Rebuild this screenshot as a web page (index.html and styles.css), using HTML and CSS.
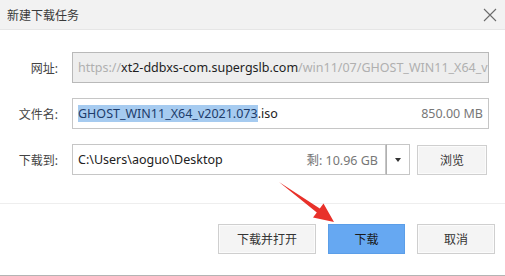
FILE: index.html
```html
<!DOCTYPE html>
<html lang="zh-CN">
<head>
  <meta charset="UTF-8" />
  <title>新建下载任务</title>
  <link rel="stylesheet" href="styles.css">
</head>
<body>
  <div class="dialog">
    <!-- Title bar -->
    <div class="titlebar">
      <span class="title">新建下载任务</span>
      <svg class="close" width="14" height="14" viewBox="0 0 14 14">
        <path d="M1 1 L13 13 M13 1 L1 13" stroke="#6b6b6b" stroke-width="1.1" fill="none"/>
      </svg>
    </div>

    <!-- Form rows -->
    <div class="form">
      <div class="row">
        <span class="label">网址:</span>
        <div class="field disabled">
          <span class="dim">https://</span><span class="host">xt2-ddbxs-com.supergslb.com</span><span class="dim">/win11/07/GHOST_WIN11_X64_v</span>
        </div>
      </div>
      <div class="row">
        <span class="label">文件名:</span>
        <div class="field">
          <span class="sel">GHOST_WIN11_X64_v2021.073</span><span>.iso</span>
          <span class="meta">850.00 MB</span>
        </div>
      </div>
      <div class="row">
        <span class="label">下载到:</span>
        <div class="field path">
          <span>C:\Users\aoguo\Desktop</span>
          <span class="meta">剩: 10.96 GB</span>
        </div>
        <div class="dropdown"><span class="caret"></span></div>
        <button class="btn browse">浏览</button>
      </div>
    </div>

    <!-- Footer buttons -->
    <div class="footer">
      <button class="btn wide">下载并打开</button>
      <button class="btn primary">下载</button>
      <button class="btn">取消</button>
    </div>

    <!-- Red annotation arrow -->
    <svg class="arrow" width="505" height="276" viewBox="0 0 505 276">
      <polygon points="279,182 319.8,208.5 323.5,203.5 334,222 313,217.5 316.8,212.5" fill="#e8312a"/>
    </svg>
  </div>
</body>
</html>
```

FILE: styles.css
```css
* { margin: 0; padding: 0; box-sizing: border-box; }

body {
  font-family: "Noto Sans", "Noto Sans CJK SC", sans-serif;
  font-size: 12px;
  color: #333;
  background: #fff;
}

.dialog {
  position: relative;
  width: 505px;
  height: 276px;
  background: #fff;
  border-bottom: 1px solid #b4b4b4;
}

/* Title bar */
.titlebar {
  height: 30px;
  display: flex;
  align-items: center;
  justify-content: space-between;
  padding: 0 8px 0 7px;
  background: #f2f2f2;
  border-bottom: 1px solid #e6e6e6;
}
.title { font-size: 12px; color: #3a3a3a; }
.close { margin-top: 1px; }

/* Form */
.form { padding: 22px 16px 28px 0; }
.row {
  display: flex;
  align-items: center;
  height: 31px;
  margin-bottom: 15px;
}
.row:last-child { margin-bottom: 0; }
.label {
  width: 58px;
  margin-right: 14px;
  text-align: right;
  color: #444;
}

.field {
  flex: 1;
  height: 31px;
  display: flex;
  align-items: center;
  padding: 0 5px;
  border: 1px solid #c6c6c6;
  background: #fff;
  font-size: 12.5px;
  color: #222;
  white-space: nowrap;
  overflow: hidden;
}
.field.disabled { background: #eeeeee; border-color: #b9b9b9; }
.dim { color: #b0b0b0; }
.host { color: #1e1e1e; }
.sel { background: #a6cbf0; color: #1d3c6b; }
.meta { margin-left: auto; color: #777; }

.field.path .meta { margin-right: 2px; }
.dropdown {
  width: 24px;
  height: 31px;
  border: 1px solid #c6c6c6;
  border-left-color: #b0b0b0;
  display: flex;
  align-items: center;
  justify-content: center;
}
.caret {
  width: 0; height: 0;
  border-left: 3px solid transparent;
  border-right: 3px solid transparent;
  border-top: 4px solid #333;
}

/* Buttons */
.btn {
  font-family: inherit;
  font-size: 12px;
  color: #333;
  height: 30px;
  width: 78px;
  background: #f4f4f4;
  border: 1px solid #cfcfcf;
  box-shadow: inset 0 0 0 1px #fbfbfb;
  cursor: pointer;
}
.browse { width: 70px; margin-left: 7px; margin-right: 2px; }
.wide { width: 98px; }
.primary {
  width: 77px;
  background: #66a8f2;
  border-color: #5b9ee8;
  box-shadow: none;
  color: #1a1a1a;
}

.footer {
  display: flex;
  justify-content: flex-end;
  gap: 12px;
  padding: 20px 10px 0 0;
  border-top: 1px solid #eeeeee;
}

/* Annotation overlay */
.arrow { position: absolute; left: 0; top: 0; pointer-events: none; }
```
